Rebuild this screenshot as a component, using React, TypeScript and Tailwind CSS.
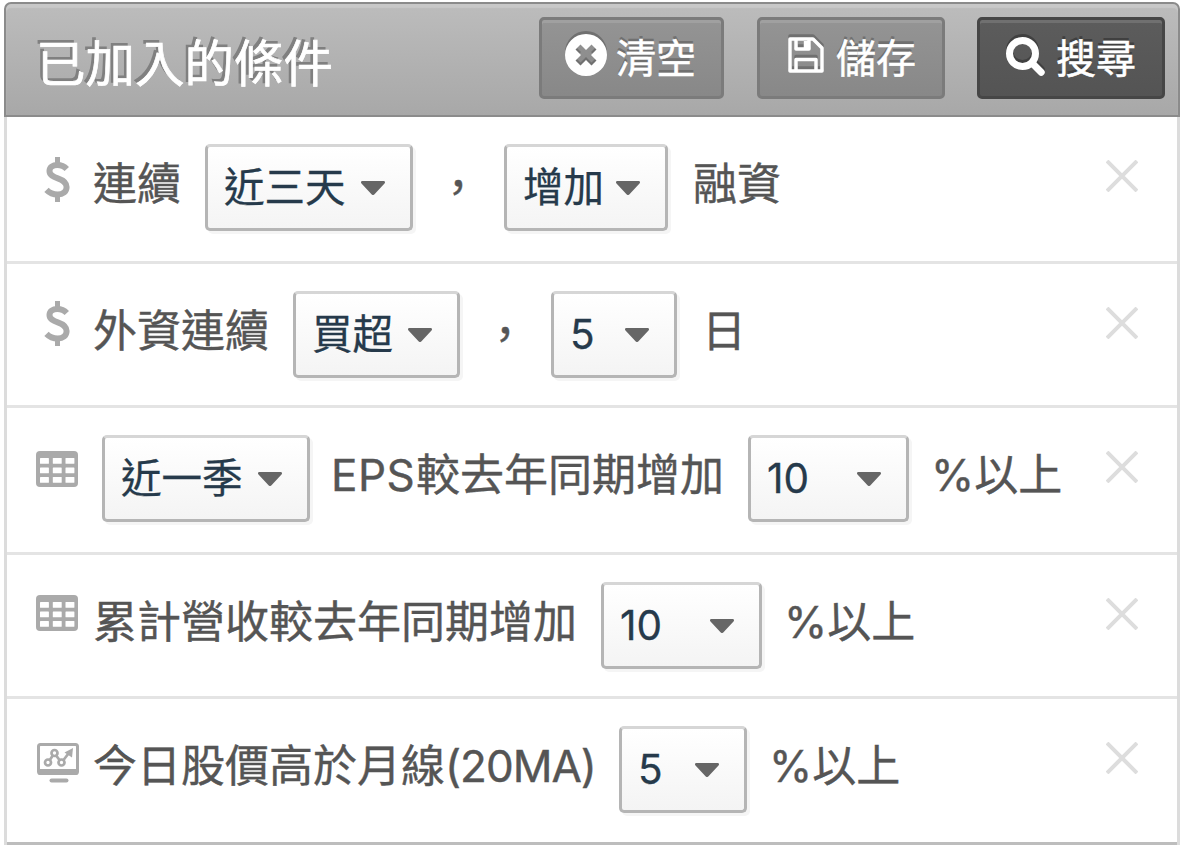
import type { ReactNode } from 'react';

type Part =
  | { kind: 'text'; text: string; className: string }
  | { kind: 'select'; value: string; className: string };

type Condition = {
  id: string;
  icon: ReactNode;
  className: string;
  parts: Part[];
};

function DollarIcon({ className }: { className: string }) {
  return (
    <svg viewBox="0 0 42 46" className={`h-[46px] w-[42px] ${className}`} fill="none" stroke="#aaaaaa" strokeWidth="6">
      <path d="M30.800 12C28.300 9.300 25 8 21.300 8c-4.700 0-7.800 2.300-7.800 6 0 4.200 3.800 5.800 8.300 7.400 5.200 1.800 8.800 4.100 8.800 8.700 0 4.600-3.600 7.400-8.900 7.400-4.600 0-8.300-1.700-11.200-4.700" />
      <path d="M21.500 0v8M21.500 37.500v7.500" strokeWidth="5" />
    </svg>
  );
}

function TableIcon({ className }: { className: string }) {
  return (
    <svg viewBox="0 0 42 36" className={`h-[36px] w-[42px] ${className}`}>
      <rect width="42" height="36" rx="4" fill="#aaaaaa" />
      <g fill="#ffffff">
        {[7, 16.5, 26].map((y) =>
          [4, 16.8, 29.5].map((x) => <rect key={`${x}-${y}`} x={x} y={y} width="8.900" height="5.800" rx="0.500" />),
        )}
      </g>
    </svg>
  );
}

function MonitorIcon({ className }: { className: string }) {
  return (
    <svg viewBox="0 0 42 40" className={`h-[40px] w-[42px] ${className}`} fill="none" stroke="#aaaaaa">
      <rect x="1.500" y="1.500" width="39" height="29" rx="2" strokeWidth="3" />
      <path d="M1 26h40v4a2 2 0 0 1-2 2H3a2 2 0 0 1-2-2z" fill="#aaaaaa" stroke="none" />
      <path d="M14.500 37.500h15" strokeWidth="4" strokeLinecap="round" />
      <g strokeWidth="2.700">
        <circle cx="11" cy="19.500" r="3" />
        <circle cx="17.500" cy="10" r="3" />
        <circle cx="24.500" cy="19.500" r="3" />
        <path d="M12.800 17l3-4.500M19.200 12.600l3.500 4.600M26.500 17l5-6.500" />
      </g>
      <path d="M36 5l-1 9.500-7.500-5z" fill="#aaaaaa" stroke="none" />
    </svg>
  );
}

const conditions: Condition[] = [
  {
    id: 'margin',
    icon: <DollarIcon className="mt-[13px]" />,
    className: 'h-[147px]',
    parts: [
      { kind: 'text', text: '連續', className: 'w-[112px]' },
      { kind: 'select', value: '近三天', className: 'w-[208px]' },
      { kind: 'text', text: '，', className: 'mt-1 ml-[23px] w-[68px]' },
      { kind: 'select', value: '增加', className: 'w-[164px]' },
      { kind: 'text', text: '融資', className: 'ml-[25px]' },
    ],
  },
  {
    id: 'foreign',
    icon: <DollarIcon className="mt-[10px]" />,
    className: 'h-[144px]',
    parts: [
      { kind: 'text', text: '外資連續', className: 'w-[200px]' },
      { kind: 'select', value: '買超', className: 'w-[167px]' },
      { kind: 'text', text: '，', className: 'mt-1 ml-[23px] w-[68px]' },
      { kind: 'select', value: '5', className: 'w-[126px]' },
      { kind: 'text', text: '日', className: 'ml-[25px]' },
    ],
  },
  {
    id: 'eps',
    icon: <TableIcon className="mt-[16px]" />,
    className: 'h-[147px]',
    parts: [
      { kind: 'select', value: '近一季', className: 'ml-[9px] w-[208px]' },
      { kind: 'text', text: 'EPS', className: 'ml-[21px] w-[85px] tracking-[0.500px]' },
      { kind: 'text', text: '較去年同期增加', className: 'w-[332px]' },
      { kind: 'select', value: '10', className: 'w-[161px]' },
      { kind: 'text', text: '%以上', className: 'ml-[22px]' },
    ],
  },
  {
    id: 'revenue',
    icon: <TableIcon className="mt-[13px]" />,
    className: 'h-[144px]',
    parts: [
      { kind: 'text', text: '累計營收較去年同期增加', className: 'w-[508px]' },
      { kind: 'select', value: '10', className: 'w-[161px]' },
      { kind: 'text', text: '%以上', className: 'ml-[22px]' },
    ],
  },
  {
    id: 'price',
    icon: <MonitorIcon className="mt-[17px] ml-px" />,
    className: 'h-[146px]',
    parts: [
      { kind: 'text', text: '今日股價高於月線', className: 'w-[352px]' },
      { kind: 'text', text: '(20MA)', className: 'w-[174px] tracking-[-1px]' },
      { kind: 'select', value: '5', className: 'w-[128px]' },
      { kind: 'text', text: '%以上', className: 'ml-[22px]' },
    ],
  },
];

function Select({ value, className }: { value: string; className: string }) {
  return (
    <button
      type="button"
      className={`flex h-[87px] shrink-0 items-center justify-between rounded-[5px] border-[3px] border-[#b5b5b5] border-t-[#d6d6d6] bg-linear-to-b from-white to-[#f4f4f4] pr-[25px] pl-4 text-[40.500px] leading-none whitespace-nowrap text-[#263a4b] shadow-[3px_3px_0_#f5f5f5] ${className}`}
    >
      <span className="pt-[2px] [-webkit-text-stroke:0.3px_#263a4b]">{value}</span>
      <svg viewBox="0 0 24 14" className="h-[14px] w-6 shrink-0" fill="#666666">
        <path d="M1.500 0h21c1.500 0 2 1.500 1 2.500l-10 10.700a2 2 0 0 1-3 0L.500 2.500C-.500 1.500 0 0 1.500 0z" />
      </svg>
    </button>
  );
}

function ConditionRow({ condition, last }: { condition: Condition; last: boolean }) {
  return (
    <li
      className={`flex items-start border-b-[3px] pt-[27px] pr-[39px] pl-[29px] ${last ? 'border-[#bdbdbd]' : 'border-[#e4e4e4]'} ${condition.className}`}
    >
      <span className="w-[57px] shrink-0">{condition.icon}</span>
      {condition.parts.map((part, i) =>
        part.kind === 'select' ? (
          <Select key={i} value={part.value} className={part.className} />
        ) : (
          <span
            key={i}
            className={`h-20 shrink-0 text-[44px] leading-[81px] whitespace-nowrap text-[#555555] [-webkit-text-stroke:0.4px_#555555] ${part.className}`}
          >
            {part.text}
          </span>
        ),
      )}
      <button type="button" aria-label="移除" className="mt-4 ml-auto shrink-0">
        <svg viewBox="0 0 32 32" className="size-8" stroke="#dddddd" strokeWidth="4">
          <path d="M1 1l30 30M31 1L1 31" />
        </svg>
      </button>
    </li>
  );
}

export default function App() {
  return (
    <div className="h-[846px] w-[1183px] overflow-hidden bg-white pt-[2px] pl-[4px] font-['Inter','Noto_Sans_CJK_TC',sans-serif]">
      <header className="flex h-[115px] w-[1176px] items-start rounded-t-[7px] border-2 border-[#8b8b8b] bg-linear-to-b from-[#bcbcbc] to-[#a8a8a8] pl-[30px] text-white shadow-[inset_0_4px_1px_#c8c8c8]">
        <h1 className="mt-[19px] w-[503px] text-[49.500px] leading-[82px] whitespace-nowrap [-webkit-text-stroke:0.7px_#ffffff] [text-shadow:-3px_-3px_0_#808080]">
          已加入的條件
        </h1>
        <button
          type="button"
          className="mt-[13px] flex h-[82px] w-[185px] items-start gap-[9px] rounded-[5px] border-[3px] border-[#7b7b7b] bg-linear-to-b from-[#949494] to-[#888888] pl-[23px] text-[40px] leading-[78px] whitespace-nowrap shadow-[inset_0_3px_0_#a0a0a0] [-webkit-text-stroke:0.5px_#ffffff] [text-shadow:0_-3px_0_#707070]"
        >
          <svg viewBox="0 0 42 42" className="mt-[14px] size-[42px] drop-shadow-[0_-3px_0_#707070]">
            <path
              fillRule="evenodd"
              fill="#ffffff"
              d="M21 0a21 21 0 1 1 0 42 21 21 0 0 1 0-42zM15.500 10.500l-5 5 5.500 5.500-5.500 5.500 5 5 5.500-5.500 5.500 5.500 5-5-5.500-5.500 5.500-5.500-5-5-5.500 5.500z"
            />
          </svg>
          清空
        </button>
        <button
          type="button"
          className="mt-[13px] ml-[33px] flex h-[82px] w-[188px] items-start gap-[12px] rounded-[5px] border-[3px] border-[#7b7b7b] bg-linear-to-b from-[#949494] to-[#888888] pl-[28px] text-[40px] leading-[78px] whitespace-nowrap shadow-[inset_0_3px_0_#a0a0a0] [-webkit-text-stroke:0.5px_#ffffff] [text-shadow:0_-3px_0_#707070]"
        >
          <svg
            viewBox="0 0 36 36"
            className="mt-[17px] size-9 drop-shadow-[0_-3px_0_#707070]"
            fill="none"
            stroke="#ffffff"
            strokeWidth="3.500"
            strokeLinejoin="round"
          >
            <path d="M2 2h23l9 9v23H2zM8 2v10h13V2M8 33V22.500h20V34" />
            <path d="M18 4v7" strokeWidth="4.500" />
          </svg>
          儲存
        </button>
        <button
          type="button"
          className="mt-[13px] ml-[32px] flex h-[82px] w-[188px] items-start gap-[11px] rounded-[5px] border-[3px] border-[#464646] bg-linear-to-b from-[#5c5c5c] to-[#545454] pl-[26px] text-[40px] leading-[78px] whitespace-nowrap shadow-[inset_0_3px_0_#707070] [-webkit-text-stroke:0.5px_#ffffff] [text-shadow:0_-3px_0_#404040]"
        >
          <svg
            viewBox="0 0 39 40"
            className="mt-[17px] h-10 w-[39px] drop-shadow-[0_-3px_0_#404040]"
            fill="none"
            stroke="#ffffff"
            strokeWidth="7"
            strokeLinecap="round"
          >
            <circle cx="16.500" cy="16.500" r="13" />
            <path d="M27 27l8.200 8.200" />
          </svg>
          搜尋
        </button>
      </header>
      <ul className="w-[1176px] border-x-[3px] border-[#dcdcdc]">
        {conditions.map((condition, i) => (
          <ConditionRow key={condition.id} condition={condition} last={i === conditions.length - 1} />
        ))}
      </ul>
    </div>
  );
}
